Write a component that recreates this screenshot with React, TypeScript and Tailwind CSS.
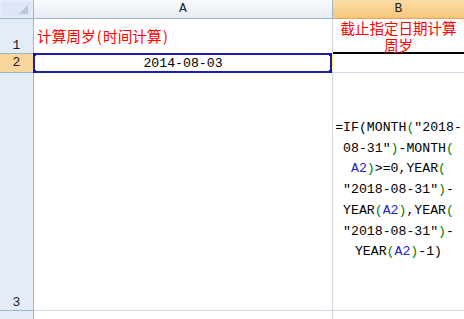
import React from "react";

const G = ({ children }: { children: React.ReactNode }) => (
  <span className="text-[#008000]">{children}</span>
);
const Bl = ({ children }: { children: React.ReactNode }) => (
  <span className="text-[#2424c8]">{children}</span>
);
const P = ({ children }: { children: React.ReactNode }) => (
  <span className="inline-block w-[7.4px] text-center">{children}</span>
);

export default function App() {
  const mono = { fontFamily: '"Liberation Mono", "DejaVu Sans Mono", monospace' };
  const cjk = { fontFamily: '"Noto Sans CJK SC", "Liberation Sans", sans-serif' };
  return (
    <div className="relative w-[464px] h-[319px] overflow-hidden bg-white">
      <div className="grid grid-cols-[34px_299px_131px] grid-rows-[19px_35px_19px_238px_20px]">
        {/* header row */}
        <div className="relative border-r border-b border-[#9eb6ce] bg-[#e4ecf7]">
          <div className="absolute left-[2px] top-[2px] w-[29px] h-[14px] bg-[#dce6f4]" />
          <svg className="absolute left-[19px] top-[5px]" width="10" height="10" viewBox="0 0 10 10">
            <polygon points="9,0 9,9 0,9" fill="#b9c7da" />
          </svg>
        </div>
        <div
          className="flex items-center justify-center border-r border-b border-[#9eb6ce] bg-gradient-to-b from-[#f9fbfd] to-[#e6ecf4] text-[13px] text-[#222]"
          style={mono}
        >
          A
        </div>
        <div
          className="flex items-center justify-center border-b border-[#e2a55a] bg-gradient-to-b from-[#fbdca7] to-[#f6c679] text-[13px] text-[#222]"
          style={mono}
        >
          B
        </div>

        {/* row 1 */}
        <div
          className="flex items-end justify-center pb-[1px] border-r border-b border-[#9eb6ce] bg-[#e4ecf7] text-[13px] leading-none text-[#222]"
          style={mono}
        >
          1
        </div>
        <div
          className="flex items-center pl-[3px] pt-[1px] border-r border-b border-[#d0d7e5] text-[14.67px] text-[#ff0000] leading-none"
          style={cjk}
        >
          计算周岁<P>(</P>时间计算<P>)</P>
        </div>
        <div
          className="flex flex-col items-center justify-center border-b-2 border-black text-[14.5px] text-[#ff0000] leading-[17px]"
          style={cjk}
        >
          <div>截止指定日期计算</div>
          <div>周岁</div>
        </div>

        {/* row 2 */}
        <div
          className="flex items-center justify-center border-r border-b border-[#9eb6ce] bg-[#f9d49b] text-[13px] text-[#222]"
          style={mono}
        >
          2
        </div>
        <div
          className="flex items-center justify-center pt-[1px] border-r border-b border-[#d0d7e5] text-[13.2px] text-black"
          style={mono}
        >
          2014-08-03
        </div>
        <div className="border-b border-[#d0d7e5]" />

        {/* row 3 */}
        <div
          className="flex items-end justify-center pb-[1px] border-r border-b border-[#9eb6ce] bg-[#e4ecf7] text-[13px] leading-none text-[#222]"
          style={mono}
        >
          3
        </div>
        <div className="border-r border-b border-[#d0d7e5]" />
        <div
          className="flex flex-col items-center justify-center border-b border-[#d0d7e5] text-[13.2px] text-black leading-[20.8px] pb-[2px]"
          style={mono}
        >
          <div>=IF(MONTH<G>(</G>"2018-</div>
          <div>08-31"<G>)</G>-MONTH<G>(</G></div>
          <div><Bl>A2</Bl><G>)</G>&gt;=0,YEAR<G>(</G></div>
          <div>"2018-08-31"<G>)</G>-</div>
          <div>YEAR<G>(</G><Bl>A2</Bl><G>)</G>,YEAR<G>(</G></div>
          <div>"2018-08-31"<G>)</G>-</div>
          <div>YEAR<G>(</G><Bl>A2</Bl><G>)</G>-1)</div>
        </div>

        {/* row 4 */}
        <div className="border-r border-[#9eb6ce] bg-[#e4ecf7]" />
        <div className="border-r border-[#d0d7e5]" />
        <div />
      </div>

      {/* selection box overlay */}
      <div className="absolute left-[33px] top-[53px] w-[299px] h-[20px] border-2 border-[#1e1ea8]" />
      <div className="absolute left-[33px] top-[53px] w-[3px] h-[3px] bg-[#1010c0]" />
      <div className="absolute left-[33px] top-[70px] w-[3px] h-[3px] bg-[#1010c0]" />
      <div className="absolute left-[329px] top-[53px] w-[3px] h-[3px] bg-[#1010c0]" />
      <div className="absolute left-[329px] top-[70px] w-[3px] h-[3px] bg-[#1010c0]" />
      <div className="absolute left-[332px] top-[55px] w-[1px] h-[16px] bg-[#ffff66]" />
    </div>
  );
}
